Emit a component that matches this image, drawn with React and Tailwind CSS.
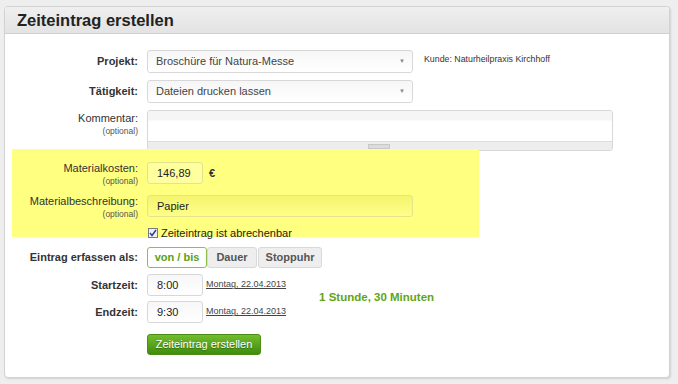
import React from "react";

const font = { fontFamily: '"Liberation Sans", Arial, sans-serif' };

const Label = ({ children, bold, optional, className = "w-[133px]" }) => (
  <div className={`${className} shrink-0 text-right text-[#333] leading-[11px]`}>
    <div className={`text-[11px] ${bold ? "font-bold" : ""}`}>{children}</div>
    {optional && <div className="text-[8.5px] text-[#555] mt-[2px]">(optional)</div>}
  </div>
);

const Select = ({ value }) => (
  <div className="ml-[9px] w-[266px] h-[23px] border border-[#d8d8d8] rounded-[3px] bg-gradient-to-b from-[#f6f6f6] to-white flex items-center justify-between pl-[8px] pr-[7px]">
    <span className="text-[11px] text-[#444]">{value}</span>
    <span className="text-[6px] text-[#888]">▼</span>
  </div>
);

const Input = ({ value, className = "w-[56px]" }) => (
  <div className={`${className} h-[22px] border border-[#d8d8d8] rounded-[3px] bg-gradient-to-b from-[#f7f7f7] to-white flex items-center pl-[9px] text-[11px] text-[#222]`}>
    {value}
  </div>
);

const DateLink = () => (
  <span className="ml-[3px] text-[9px] text-[#444] underline">Montag, 22.04.2013</span>
);

export default function App() {
  return (
    <div className="w-[678px] h-[384px] bg-[#eeeeee] pt-[6px] pl-[4px]" style={font}>
      <div className="w-[666px] h-[372px] bg-white border border-[#d2d2d2] rounded-[4px] shadow-[1px_1px_2px_rgba(0,0,0,0.12)] overflow-hidden">
        <div className="h-[27px] bg-gradient-to-b from-[#efefef] to-[#e3e3e3] border-b border-[#cfcfcf] flex items-center pl-[12px]">
          <h1 className="text-[16.5px] font-bold text-[#222]">Zeiteintrag erstellen</h1>
        </div>

        <div className="pt-[16px] flex flex-col">
          <div className="flex items-center h-[23px]">
            <Label bold>Projekt:</Label>
            <Select value="Broschüre für Natura-Messe" />
            <span className="ml-[11px] self-start mt-[3px] text-[8.8px] text-[#333]">Kunde: Naturheilpraxis Kirchhoff</span>
          </div>

          <div className="flex items-center h-[23px] mt-[7px]">
            <Label bold>Tätigkeit:</Label>
            <Select value="Dateien drucken lassen" />
          </div>

          <div className="flex items-start mt-[7px]">
            <Label optional className="w-[133px] pt-[3px]">Kommentar:</Label>
            <div className="ml-[9px] w-[466px] h-[41px] border border-[#d8d8d8] rounded-[3px] bg-white flex flex-col overflow-hidden">
              <div className="h-[10px] bg-[#f5f5f5] border-b border-[#fafafa]" />
              <div className="flex-1" />
              <div className="h-[9px] bg-[#ededed] border-t border-[#dcdcdc] flex items-center pl-[220px]">
                <div className="w-[22px] h-[5px] bg-[#dcdcdc] border border-[#c8c8c8]" />
              </div>
            </div>
          </div>

          <div className="ml-[7px] w-[467px] bg-[#ffff80] -mt-[2px] pt-[13px] pb-[20px] flex flex-col">
            <div className="flex items-center h-[22px]">
              <Label optional className="w-[126px] pt-[3px]">Materialkosten:</Label>
              <div className="ml-[9px]">
                <Input value="146,89" className="w-[56px] bg-none bg-[#ffffa0] border-[#e4e48a]" />
              </div>
              <span className="ml-[6px] text-[11px] font-bold text-[#333]">€</span>
            </div>
            <div className="flex items-center h-[22px] mt-[11px]">
              <Label optional className="w-[126px] pt-[3px]">Materialbeschreibung:</Label>
              <div className="ml-[9px] w-[266px] h-[22px] border border-[#e4e48a] rounded-[3px] bg-gradient-to-b from-[#f4f46e] to-[#ffff88] flex items-center pl-[9px] text-[11px] text-[#222]">
                Papier
              </div>
            </div>
          </div>

          <div className="flex items-center -mt-[10px] h-[12px] pl-[143px]">
            <span className="w-[10px] h-[10px] border border-[#7a7a7a] bg-[#f0f0f0] flex items-center justify-center">
              <svg width="8" height="8" viewBox="0 0 8 8">
                <path d="M1 4 L3 6.5 L7 1" fill="none" stroke="#2a3fa0" strokeWidth="1.5" />
              </svg>
            </span>
            <span className="ml-[3px] text-[11px] text-[#222]">Zeiteintrag ist abrechenbar</span>
          </div>

          <div className="flex items-center h-[21px] mt-[8px]">
            <Label bold>Eintrag erfassen als:</Label>
            <div className="ml-[9px] flex">
              <div className="w-[60px] h-[21px] border border-[#8cc04a] rounded-[3px] bg-white flex items-center justify-center text-[11px] font-bold text-[#5a9e1a]">von / bis</div>
              <div className="w-[50px] h-[21px] border border-[#d8d8d8] rounded-[3px] bg-[#eeeeee] flex items-center justify-center text-[11px] font-bold text-[#555]">Dauer</div>
              <div className="ml-[1px] w-[64px] h-[21px] border border-[#d8d8d8] rounded-[3px] bg-[#eeeeee] flex items-center justify-center text-[11px] font-bold text-[#555]">Stoppuhr</div>
            </div>
          </div>

          <div className="flex">
            <div className="flex flex-col">
              <div className="flex items-center h-[22px] mt-[6px]">
                <Label bold>Startzeit:</Label>
                <div className="ml-[9px] flex items-center">
                  <Input value="8:00" />
                  <DateLink />
                </div>
              </div>
              <div className="flex items-center h-[22px] mt-[5px]">
                <Label bold>Endzeit:</Label>
                <div className="ml-[9px] flex items-center">
                  <Input value="9:30" />
                  <DateLink />
                </div>
              </div>
            </div>
            <div className="ml-[33px] mt-[21px] text-[11.5px] font-bold text-[#62a514]">1 Stunde, 30 Minuten</div>
          </div>

          <div className="pl-[142px] mt-[8px]">
            <button className="w-[114px] h-[21px] rounded-[3px] border border-[#4a8c14] bg-gradient-to-b from-[#72bd2c] to-[#3f8c0e] text-white text-[11px] [text-shadow:0_1px_1px_rgba(0,0,0,0.35)]" style={font}>
              Zeiteintrag erstellen
            </button>
          </div>
        </div>
      </div>
    </div>
  );
}
